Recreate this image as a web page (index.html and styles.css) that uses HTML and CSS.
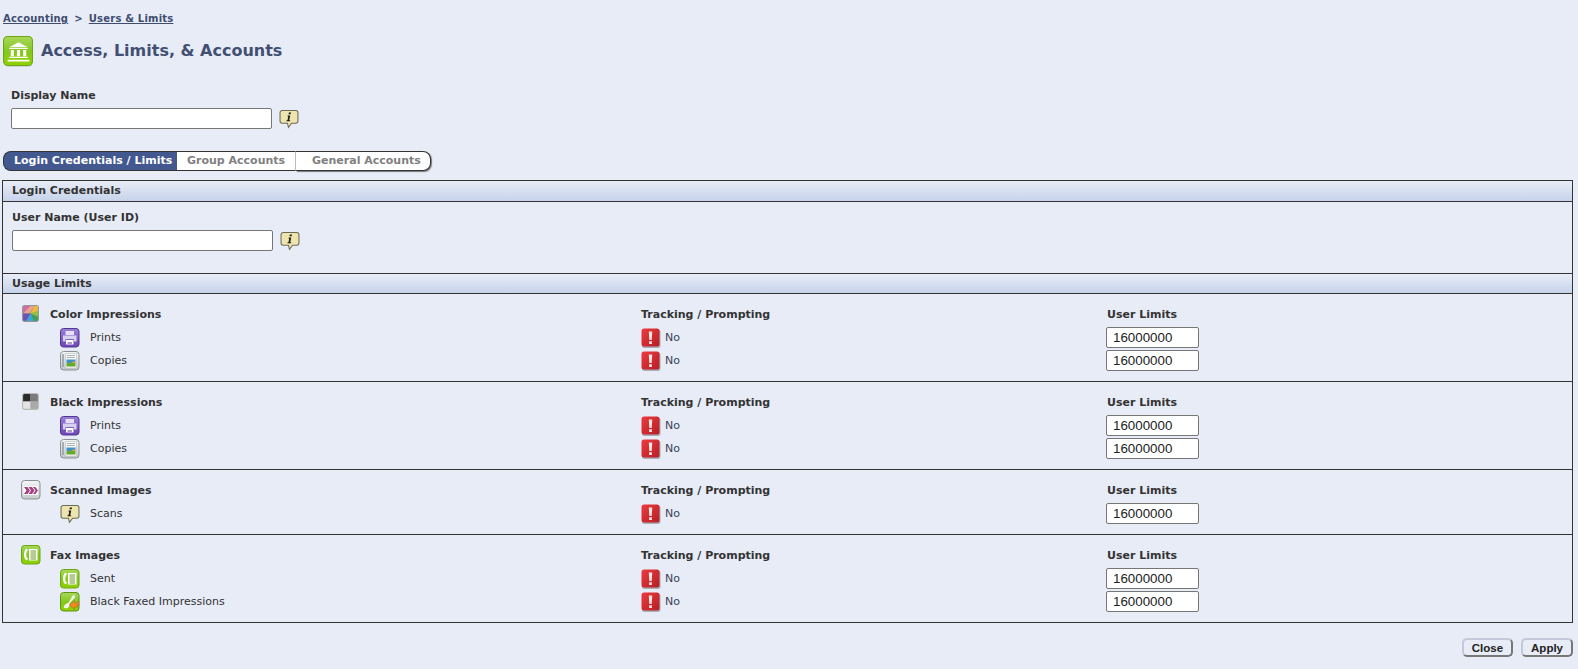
FILE: index.html
```html
<!DOCTYPE html>
<html lang="en">
<head>
    <meta charset="UTF-8">
    <title>Access, Limits, &amp; Accounts</title>
    <link rel="stylesheet" href="styles.css">
</head>
<body>

<svg class="icon-defs" width="0" height="0">
    <defs>
        <linearGradient id="greenFill" x1="0" y1="0" x2="0" y2="1">
            <stop offset="0" stop-color="#a8d85c"/>
            <stop offset="0.5" stop-color="#86c81e"/>
            <stop offset="1" stop-color="#8fd000"/>
        </linearGradient>
        <linearGradient id="purpleFill" x1="0" y1="0" x2="0" y2="1">
            <stop offset="0" stop-color="#9a7fdc"/>
            <stop offset="1" stop-color="#6f45b8"/>
        </linearGradient>
        <linearGradient id="redFill" x1="0" y1="0" x2="1" y2="1">
            <stop offset="0" stop-color="#ec3a40"/>
            <stop offset="1" stop-color="#b51f26"/>
        </linearGradient>
        <linearGradient id="greyFill" x1="0" y1="0" x2="0" y2="1">
            <stop offset="0" stop-color="#f4f5f6"/>
            <stop offset="1" stop-color="#c4c8cc"/>
        </linearGradient>
    </defs>

    <symbol id="i-bank" viewBox="0 0 30 30">
        <rect x="1" y="1.5" width="28" height="28" rx="4" fill="#7d8a78" opacity=".45"/>
        <rect x=".5" y=".5" width="28" height="28" rx="4" fill="url(#greenFill)" stroke="#6fa510"/>
        <path d="M15 6 L24 11 H6 Z" fill="#fff"/>
        <path d="M6 11.5h18v1.2H6zM7.5 13.5h3v6h-3zM13.5 13.5h3v6h-3zM19.5 13.5h3v6h-3zM6 20h18v1.3H6zM4.5 23h21v1.6h-21z" fill="#fff"/>
    </symbol>

    <symbol id="i-info" viewBox="0 0 19 19">
        <path d="M3 1.5h13a2 2 0 0 1 2 2v8a2 2 0 0 1-2 2h-4l-3 4-1-4H3a2 2 0 0 1-2-2v-8a2 2 0 0 1 2-2z" fill="#eee4ad" stroke="#6c6a58"/>
        <path d="M9.4 3.4h2l-.4 1.7h-2zM8.3 6.2h2.4l-1 4.5h1l-.3 1H7l.3-1h.8l.7-3.5h-.8z" fill="#1a1a1a"/>
    </symbol>

    <symbol id="i-color" viewBox="0 0 19 19">
        <rect x="1" y="1" width="16" height="16" rx="2.5" fill="#8f9499"/>
        <path d="M2 3.5 A1.5 1.5 0 0 1 3.5 2H9L2 9z" fill="#d66aa5"/>
        <path d="M9 2h4L8 9H2z" fill="#e9a58a"/>
        <path d="M13 2h3v5l-7 2z" fill="#eebb3c"/>
        <path d="M16 7v5l-7-3z" fill="#93c23a"/>
        <path d="M16 12v2.5a1.5 1.5 0 0 1-1.500 1.500H12L9 9z" fill="#3f9e5a"/>
        <path d="M12 16H5L9 9z" fill="#36a8dc"/>
        <path d="M5 16H3.500A1.500 1.500 0 0 1 2 14.500V9h7z" fill="#6a55b5"/>
    </symbol>

    <symbol id="i-black" viewBox="0 0 19 19">
        <rect x="1" y="1" width="16" height="16" rx="2.500" fill="#b6b8ba"/>
        <path d="M2 3.500A1.500 1.500 0 0 1 3.500 2H9v7H2z" fill="#2a2a2a"/>
        <path d="M9 2h5.500A1.500 1.500 0 0 1 16 3.500V9H9z" fill="#7b7b7b"/>
        <path d="M2 9h7v7H3.500A1.500 1.500 0 0 1 2 14.500z" fill="#e4e4e4"/>
        <path d="M9 9h7v5.500a1.500 1.500 0 0 1-1.500 1.500H9z" fill="#a9a9a9"/>
    </symbol>

    <symbol id="i-print" viewBox="0 0 20 20">
        <rect x=".5" y=".5" width="18.500" height="18.500" rx="3" fill="url(#purpleFill)" stroke="#4e3a86"/>
        <path d="M5.500 3h8.500v4H5.500z" fill="#e6e0f5"/>
        <path d="M3 7.500h13.500v6H14v-2.500H5.500v2.500H3z" fill="#d8d2ee"/>
        <path d="M6 12h7.500v4.500H6z" fill="#fff"/>
        <path d="M7.500 14.500h4.500v1H7.500z" fill="#4e3a86"/>
    </symbol>

    <symbol id="i-copy" viewBox="0 0 20 20">
        <rect x=".5" y=".5" width="18.500" height="18.500" rx="3" fill="url(#greyFill)" stroke="#8c9094"/>
        <path d="M3 3v13" stroke="#8f9aa3" stroke-width="1.500" fill="none"/>
        <path d="M5.500 2.500h11v14.500h-11z" fill="#f7f8f8" stroke="#b5b9bd" stroke-width=".6"/>
        <path d="M7 4.500h8M7 6.500h8" stroke="#9aa0a6" stroke-width=".8"/>
        <path d="M6.500 8.500h9v3.500h-9z" fill="#3d92c8"/>
        <path d="M6.500 12h9v3.500h-9z" fill="#66a82a"/>
        <path d="M11 12l3-2 1.500 2z" fill="#e2a23a"/>
    </symbol>

    <symbol id="i-scan" viewBox="0 0 20 20">
        <rect x=".5" y=".5" width="18.500" height="18.500" rx="3" fill="url(#greyFill)" stroke="#8c9094"/>
        <path d="M2.500 6h14.500v9H2.500z" fill="#fff"/>
        <path d="M3 7h3.500l2.500 3.500L6.500 14H3l2.500-3.500zM7.500 7H11l2.500 3.500L11 14H7.500l2.500-3.500zM12 7h2.500l2.500 3.500-2.500 3.500H12l2.500-3.500z" fill="#a4417f"/>
    </symbol>

    <symbol id="i-fax" viewBox="0 0 20 20">
        <rect x=".5" y=".5" width="18.500" height="18.500" rx="3" fill="url(#greenFill)" stroke="#6fa510"/>
        <path d="M6 3.500C3.500 4.500 3 7 3 9.500s.5 5 3 6l1-2.500H6c-.6-1-.7-2.200-.7-3.500s.1-2.500.7-3.500h1z" fill="#fff"/>
        <rect x="8" y="4" width="8.500" height="11.500" fill="#fff"/>
        <path d="M9.500 6h5.500M9.500 8h5.500M9.500 10h5.500M9.500 12h5.500M9.500 14h5.500" stroke="#5d8a14" stroke-width=".9"/>
    </symbol>

    <symbol id="i-faxed" viewBox="0 0 20 20">
        <rect x=".5" y=".5" width="18.500" height="18.500" rx="3" fill="url(#greenFill)" stroke="#5f9410"/>
        <path d="M14 3c1.200.8 1.200 2.200.3 3.200L9.500 11.500c.3 1.800-.3 3.500-2 4.500-1.500.8-3.300.2-3.700-.8-.3-1 1-2.500 2.500-3.500.8-.5 1.500-.7 2-.6l4-6.800C12.800 3.500 13.300 2.800 14 3z" fill="#f2f5ee"/>
        <path d="M19 9.500v3.500h-1.500v2h-3v2.500L9.500 13l5-4.500V11h3V9.500z" fill="#ee8a1f" stroke="#b7621a" stroke-width=".5"/>
    </symbol>

    <symbol id="i-alert" viewBox="0 0 20 20">
        <rect x="1" y="1.500" width="18.500" height="18.500" rx="2.500" fill="#6c7078" opacity=".5"/>
        <rect x=".5" y=".5" width="18" height="18" rx="2.500" fill="url(#redFill)"/>
        <path d="M7.800 3.500h3.400l-.5 8.500H8.300z" fill="#f8e9e4"/>
        <rect x="8.200" y="13.200" width="2.600" height="2.800" fill="#f8e9e4"/>
    </symbol>
</svg>

<nav class="breadcrumb">
    <a href="#">Accounting</a><span class="crumb-sep">&gt;</span><a href="#">Users &amp; Limits</a>
</nav>

<header class="page-title">
    <svg class="title-icon"><use href="#i-bank"/></svg>
    <h1>Access, Limits, &amp; Accounts</h1>
</header>

<div class="field display-name">
    <label for="displayName">Display Name</label>
    <div class="field-line">
        <input id="displayName" class="text-input" type="text">
        <svg class="icon"><use href="#i-info"/></svg>
    </div>
</div>

<div class="tabs">
    <a class="tab tab-active" href="#">Login Credentials / Limits</a>
    <a class="tab tab-mid" href="#">Group Accounts</a>
    <a class="tab tab-last" href="#">General Accounts</a>
</div>

<div class="panel">
    <h2 class="section-head">Login Credentials</h2>
    <div class="field user-name">
        <label for="userName">User Name (User ID)</label>
        <div class="field-line">
            <input id="userName" class="text-input" type="text">
            <svg class="icon"><use href="#i-info"/></svg>
        </div>
    </div>

    <h2 class="section-head section-usage">Usage Limits</h2>

    <section class="group">
        <div class="row head-row">
            <div class="name"><svg class="icon group-icon"><use href="#i-color"/></svg><b>Color Impressions</b></div>
            <b>Tracking / Prompting</b>
            <b class="limit-head">User Limits</b>
        </div>
        <div class="row">
            <div class="name sub"><svg class="icon"><use href="#i-print"/></svg>Prints</div>
            <div class="status"><svg class="icon"><use href="#i-alert"/></svg>No</div>
            <input class="limit" type="text" value="16000000">
        </div>
        <div class="row">
            <div class="name sub"><svg class="icon"><use href="#i-copy"/></svg>Copies</div>
            <div class="status"><svg class="icon"><use href="#i-alert"/></svg>No</div>
            <input class="limit" type="text" value="16000000">
        </div>
    </section>

    <section class="group">
        <div class="row head-row">
            <div class="name"><svg class="icon group-icon"><use href="#i-black"/></svg><b>Black Impressions</b></div>
            <b>Tracking / Prompting</b>
            <b class="limit-head">User Limits</b>
        </div>
        <div class="row">
            <div class="name sub"><svg class="icon"><use href="#i-print"/></svg>Prints</div>
            <div class="status"><svg class="icon"><use href="#i-alert"/></svg>No</div>
            <input class="limit" type="text" value="16000000">
        </div>
        <div class="row">
            <div class="name sub"><svg class="icon"><use href="#i-copy"/></svg>Copies</div>
            <div class="status"><svg class="icon"><use href="#i-alert"/></svg>No</div>
            <input class="limit" type="text" value="16000000">
        </div>
    </section>

    <section class="group">
        <div class="row head-row">
            <div class="name"><svg class="icon group-icon"><use href="#i-scan"/></svg><b>Scanned Images</b></div>
            <b>Tracking / Prompting</b>
            <b class="limit-head">User Limits</b>
        </div>
        <div class="row">
            <div class="name sub"><svg class="icon"><use href="#i-info"/></svg>Scans</div>
            <div class="status"><svg class="icon"><use href="#i-alert"/></svg>No</div>
            <input class="limit" type="text" value="16000000">
        </div>
    </section>

    <section class="group">
        <div class="row head-row">
            <div class="name"><svg class="icon group-icon"><use href="#i-fax"/></svg><b>Fax Images</b></div>
            <b>Tracking / Prompting</b>
            <b class="limit-head">User Limits</b>
        </div>
        <div class="row">
            <div class="name sub"><svg class="icon"><use href="#i-fax"/></svg>Sent</div>
            <div class="status"><svg class="icon"><use href="#i-alert"/></svg>No</div>
            <input class="limit" type="text" value="16000000">
        </div>
        <div class="row">
            <div class="name sub"><svg class="icon"><use href="#i-faxed"/></svg>Black Faxed Impressions</div>
            <div class="status"><svg class="icon"><use href="#i-alert"/></svg>No</div>
            <input class="limit" type="text" value="16000000">
        </div>
    </section>
</div>

<div class="actions">
    <button type="button">Close</button>
    <button type="button">Apply</button>
</div>

</body>
</html>
```

FILE: styles.css
```css
* {
    box-sizing: border-box;
}

html, body {
    height: 100%;
}

body {
    margin: 0;
    padding: 0 5px 0 2px;
    overflow: hidden;
    background-color: #e8ecf7;
    color: #333;
    font-family: 'DejaVu Sans', sans-serif;
    font-size: 11px;
}

.icon-defs {
    position: absolute;
}

.icon {
    flex: none;
    display: block;
    width: 20px;
    height: 20px;
}

/* Top of page */
.breadcrumb {
    height: 36px;
    padding: 12px 0 0 1px;
    font-size: 10px;
    font-weight: bold;
    line-height: 13px;
    letter-spacing: .2px;
}

.breadcrumb a {
    color: #3f4d70;
}

.crumb-sep {
    margin: 0 6px;
    color: #3f4d70;
}

.page-title {
    display: flex;
    align-items: center;
    height: 31px;
    padding-left: 1px;
}

.title-icon {
    flex: none;
    width: 31px;
    height: 31px;
}

.page-title h1 {
    margin: 0 0 3px 7px;
    color: #434f72;
    font-size: 16px;
    font-weight: bold;
}

/* Fields */
.field label {
    display: block;
    font-weight: bold;
    line-height: 14px;
}

.field-line {
    display: flex;
    align-items: center;
    margin-top: 5px;
}

.text-input {
    width: 261px;
    height: 21px;
    margin-right: 7px;
    border: 1px solid #767676;
    border-radius: 2px;
    background: #fff;
}

.display-name {
    padding: 22px 0 0 9px;
}

.user-name {
    height: 71px;
    padding: 9px 0 0 9px;
}

/* Tabs */
.tabs {
    display: flex;
    margin: 22px 0 9px 1px;
    height: 20px;
    font-weight: bold;
    line-height: 18px;
}

.tab {
    border: 1px solid #333;
    background: #fff;
    color: #7f7f7f;
    text-decoration: none;
    white-space: nowrap;
}

.tab-active {
    width: 174px;
    padding-left: 10px;
    border-right: 0;
    border-radius: 8px 0 0 8px;
    background: #42588f;
    color: #fff;
}

.tab-mid {
    width: 119px;
    padding-left: 10px;
    border-left: 0;
    border-right: 1px solid #bbb;
}

.tab-last {
    width: 135px;
    padding-left: 16px;
    border-left: 0;
    border-radius: 0 8px 8px 0;
    box-shadow: 1px 1px 1px #777;
}

/* Main panel */
.panel {
    border: 1px solid #333;
}

.section-head {
    height: 21px;
    margin: 0;
    padding-left: 9px;
    border-bottom: 1px solid #333;
    background: linear-gradient(#e8ecf7, #c6d3ea);
    font-size: 11px;
    line-height: 20px;
}

.section-usage {
    border-top: 1px solid #333;
    height: 21px;
    line-height: 19px;
}

.group {
    padding: 8px 0 9px;
    border-bottom: 1px solid #333;
}

.group:last-child {
    border-bottom: 0;
}

.row {
    display: grid;
    grid-template-columns: 638px 465px 93px;
    align-items: center;
    height: 23px;
}

.head-row {
    height: 24px;
}

.name {
    display: flex;
    align-items: center;
}

.name b {
    margin-left: 9px;
}

.group-icon {
    margin-left: 18px;
}

.sub {
    padding-left: 57px;
}

.sub .icon {
    margin-right: 10px;
}

.status {
    display: flex;
    align-items: center;
    color: #3a3f55;
}

.status .icon {
    margin-right: 4px;
}

.limit-head {
    padding-left: 1px;
}

.limit {
    width: 93px;
    height: 21px;
    padding: 0 6px;
    border: 1px solid #767676;
    border-radius: 2px;
    background: #fff;
    color: #222;
    font-family: 'Liberation Sans', sans-serif;
    font-size: 13.33px;
}

/* Bottom buttons */
.actions {
    display: flex;
    justify-content: flex-end;
    gap: 8px;
    margin-top: 15px;
}

.actions button {
    height: 19px;
    padding: 0 8px;
    border: 2px solid #c3c9d8;
    border-right-color: #777;
    border-bottom-color: #777;
    border-radius: 5px;
    background: #e8ecf7;
    color: #222;
    font-family: 'Liberation Sans', sans-serif;
    font-size: 11.5px;
    font-weight: bold;
}
```
